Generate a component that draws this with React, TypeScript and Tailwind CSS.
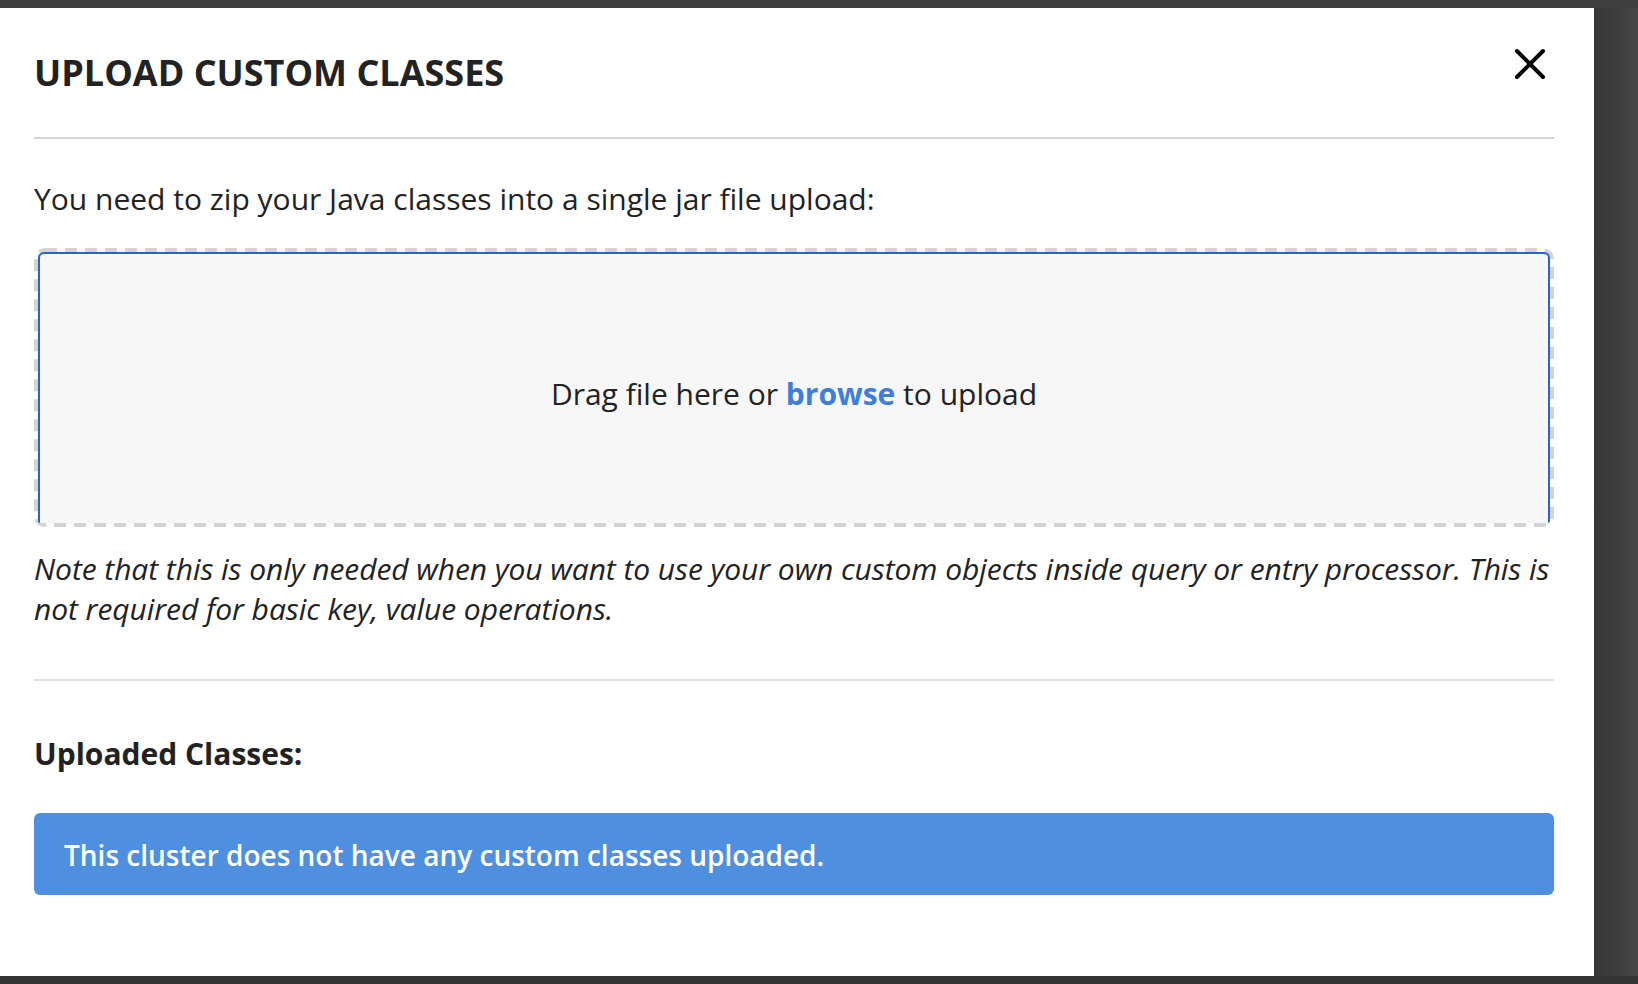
export default function App() {
  return (
    <div
      className="w-[1638px] h-[984px] flex flex-col bg-[#333333] overflow-hidden"
      style={{ fontFamily: '"Open Sans", "Noto Sans", sans-serif' }}
    >
      <div className="h-[8px] bg-[#3f3f3f]" />
      <div className="flex h-[968px]">
        <div className="w-[1594px] h-full bg-white pt-[41px] pl-[34px] pr-[40px] text-[#222222]">
          <div className="flex items-start justify-between">
            <h1 className="text-[36px] leading-[48px] font-bold">UPLOAD CUSTOM CLASSES</h1>
            <button className="w-[32px] h-[32px] mr-[8px] -mt-[1px]" aria-label="Close">
              <svg viewBox="0 0 32 32" className="w-[32px] h-[32px]">
                <path d="M3 3 L29 29 M29 3 L3 29" stroke="#000" strokeWidth="4" strokeLinecap="round" />
              </svg>
            </button>
          </div>
          <div className="mt-[40px] h-[2px] bg-[#d4d4d4]" />

          <p className="mt-[40px] text-[30px] leading-[40px]">
            You need to zip your Java classes into a single jar file upload:
          </p>

          {/* drop zone */}
          <div className="relative mt-[29px] h-[279px] p-[4px]">
            <svg className="absolute inset-0" width="1520" height="279" viewBox="0 0 1520 279">
              <rect
                x="2"
                y="2"
                width="1516"
                height="275"
                rx="9"
                fill="#fafafa"
                stroke="#d3d3d3"
                strokeWidth="4"
                strokeDasharray="12 8"
              />
            </svg>
            <div className="relative h-full rounded-t-[6px] rounded-b-[2px] border-t-[2px] border-x-[2px] border-[#2b62cc] bg-[#f7f7f7] flex items-center justify-center pt-[10px]">
              <span className="text-[30px] leading-[40px]">
                Drag file here or <span className="font-bold text-[#3d7fdc]">browse</span> to upload
              </span>
            </div>
          </div>

          <p className="mt-[22px] text-[30px] leading-[40px] italic tracking-[-0.06px]">
            Note that this is only needed when you want to use your own custom objects inside query or entry processor. This is not required for basic key, value operations.
          </p>

          <div className="mt-[50px] h-[2px] bg-[#e0e0e0]" />

          <h2 className="mt-[53px] text-[30px] leading-[40px] font-bold">Uploaded Classes:</h2>

          <div className="mt-[39px] rounded-[6px] bg-[#4f8fdf] pt-[22px] pb-[20px] px-[30px]">
            <p className="text-[28px] leading-[40px] font-semibold text-white">
              This cluster does not have any custom classes uploaded.
            </p>
          </div>
        </div>
        <div className="flex-1 bg-gradient-to-r from-[#363636] to-[#464646]" />
      </div>
      <div className="h-[8px] bg-[#333333]" />
    </div>
  );
}
